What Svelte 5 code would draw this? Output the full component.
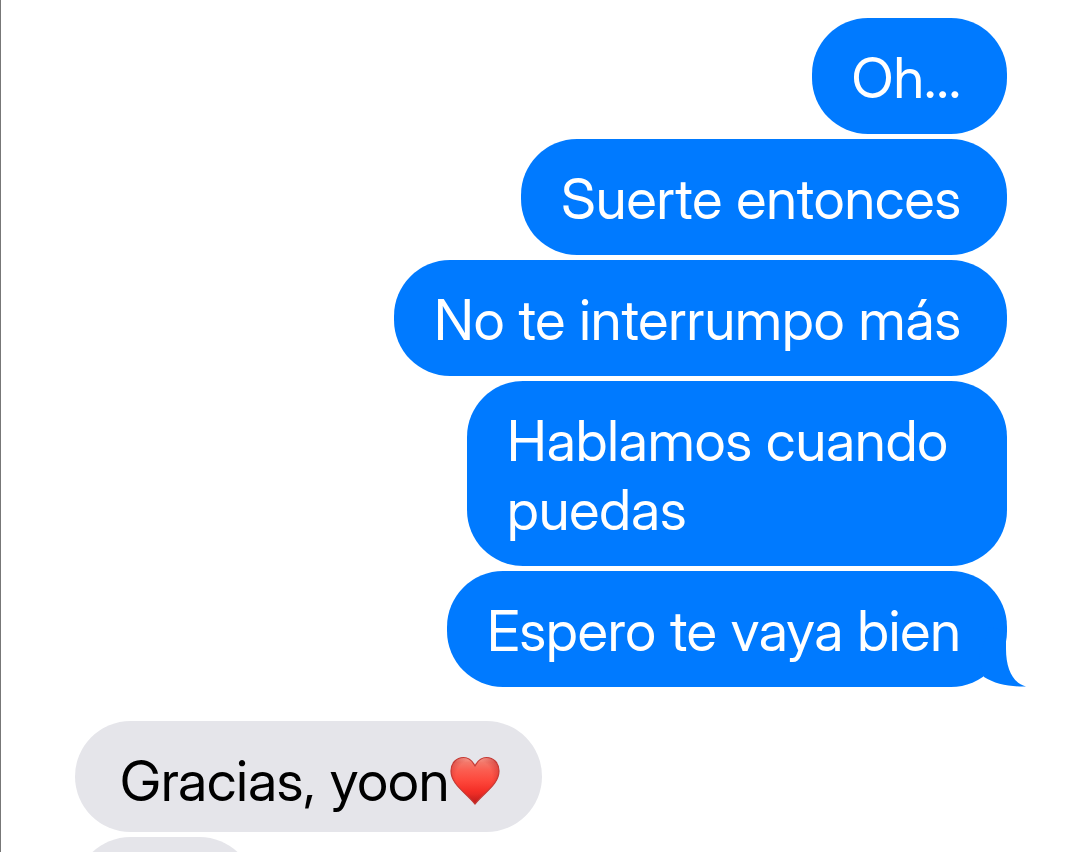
<script>
  const sent = ['Oh...', 'Suerte entonces', 'No te interrumpo más', 'Hablamos cuando puedas', 'Espero te vaya bien'];
</script>

<main>
  <section class="sent">
    {#each sent as text, i}
      <p class="bubble" class:wrapped={i === 3}>
        {text}
        {#if i === sent.length - 1}
          <svg class="tail" viewBox="0 0 48 60" aria-hidden="true"><path d="M10 0L28 4L27 6V22C27 42 34 56 47 59.5C31 60 16 57 5 50L0 30Z" fill="#007aff" /></svg>
        {/if}
      </p>
    {/each}
  </section>
  <section class="received">
    <p class="bubble">Gracias, yoon<svg class="heart" viewBox="0 0 50 50" role="img" aria-label="❤️">
      <defs>
        <linearGradient id="red" x1="0" y1="0" x2="0" y2="1"><stop offset="0" stop-color="#f9a396" /><stop offset=".1" stop-color="#f3796b" /><stop offset=".28" stop-color="#fb5d50" /><stop offset=".5" stop-color="#fd473b" /><stop offset=".72" stop-color="#f42f27" /><stop offset="1" stop-color="#c9221f" /></linearGradient>
        <radialGradient id="shade" cx=".48" cy=".42" r=".58"><stop offset=".65" stop-color="#b51418" stop-opacity="0" /><stop offset="1" stop-color="#b51418" stop-opacity=".45" /></radialGradient>
      </defs>
      <path d="M25 10C22 4 18 1.5 13.5 1.5C6.500 1.500 1 7 1 15C1 28 15 36 25 48C35 36 49 28 49 15C49 7 43.500 1.500 36.500 1.500C32 1.500 28 4 25 10Z" fill="url(#red)" />
      <path d="M25 10C22 4 18 1.5 13.5 1.5C6.500 1.500 1 7 1 15C1 28 15 36 25 48C35 36 49 28 49 15C49 7 43.500 1.500 36.500 1.500C32 1.500 28 4 25 10Z" fill="url(#shade)" stroke="#c43a35" stroke-width="1.2" stroke-linejoin="round" />
    </svg></p>
    <p class="bubble next" aria-hidden="true"></p>
  </section>
</main>

<style>
  :global(body) { background: #fff; }
  main {
    box-sizing: border-box;
    height: 100vh;
    overflow: hidden;
    padding: 18px 73px 0 74px;
    border-left: 1px solid #777;
    font-family: "Inter Display", Inter, "Liberation Sans", sans-serif;
    font-size: 56px;
    font-variation-settings: "opsz" 32;
    line-height: 69px;
  }
  section { display: flex; flex-direction: column; gap: 5px; }
  .bubble { position: relative; box-sizing: border-box; margin: 0; max-width: 640px; border-radius: 56px; }
  .sent { align-items: flex-end; }
  .sent .bubble { padding: 26px 46px 21px 40px; color: #fff; background: #007aff; }
  .sent .wrapped { max-width: 540px; }
  .tail { position: absolute; right: -20px; bottom: 0; width: 48px; height: 60px; }
  .received { align-items: flex-start; margin-top: 34px; }
  .received .bubble { padding: 26px 42px 16px 45px; color: #000; background: #e5e5ea; }
  .heart { width: 50px; height: 50px; margin: 0 0 -5px 1px; vertical-align: baseline; }
  .received .next { width: 180px; height: 111px; }
</style>
